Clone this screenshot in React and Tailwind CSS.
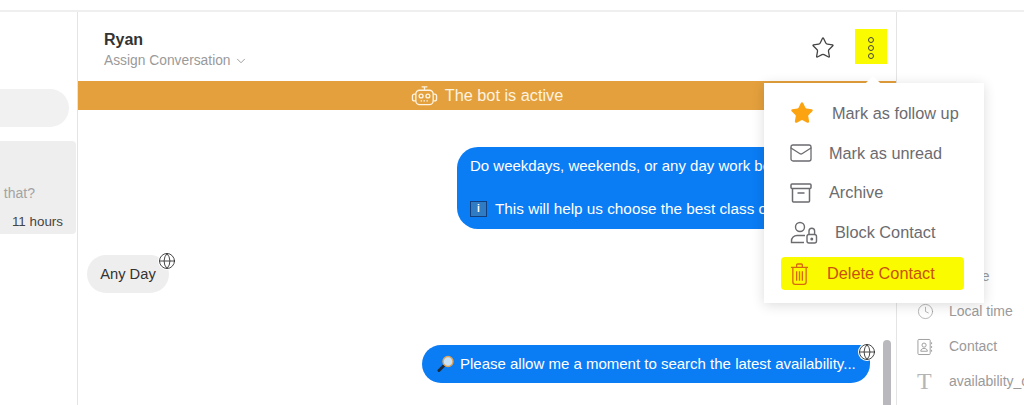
import { ChevronDown, Clock, Globe, Mail, Star } from 'lucide-react'

function BotIcon({ className }) {
  return (
    <svg viewBox="0 0 28 24" fill="none" stroke="currentColor" strokeWidth="1.4" className={className}>
      <rect x="5" y="6" width="18" height="15" rx="4" />
      <path d="M14 6V3M11 2.5h6" />
      <path d="M5 10H3.5a2 2 0 0 0-2 2v3a2 2 0 0 0 2 2H5M23 10h1.500a2 2 0 0 1 2 2v3a2 2 0 0 1-2 2H23" />
      <circle cx="10.500" cy="12" r="2" />
      <circle cx="17.500" cy="12" r="2" />
      <path d="M10 17h8" strokeDasharray="1.500 1.500" />
    </svg>
  )
}

function ArchiveIcon({ className }) {
  return (
    <svg viewBox="0 0 22 20" fill="none" stroke="currentColor" strokeWidth="1.5" className={className}>
      <rect x="1" y="1" width="20" height="4.500" rx="1" />
      <path d="M2.500 5.500V18a1 1 0 0 0 1 1h15a1 1 0 0 0 1-1V5.500" />
      <path d="M7.500 10h7" />
    </svg>
  )
}

function BlockIcon({ className }) {
  return (
    <svg viewBox="0 0 28 23" fill="none" stroke="currentColor" strokeWidth="1.400" className={className}>
      <circle cx="10" cy="6" r="4.500" />
      <path d="M15 14.500h-8a5.500 5.500 0 0 0-5.500 5.500v1.500H14" />
      <rect x="17" y="13.500" width="9.500" height="8.500" rx="2" />
      <path d="M19 13.500V10a2.800 2.800 0 0 1 5.600 0v3.500" />
      <circle cx="21.800" cy="18" r="0.800" fill="currentColor" />
    </svg>
  )
}

function TrashIcon({ className }) {
  return (
    <svg viewBox="0 0 20 24" fill="none" stroke="currentColor" strokeWidth="1.400" className={className}>
      <path d="M1 5h18M7 5V2.500a1 1 0 0 1 1-1h4a1 1 0 0 1 1 1V5" />
      <path d="M3 5v15.500a2.500 2.500 0 0 0 2.500 2.500h9a2.500 2.500 0 0 0 2.500-2.500V5" />
      <path d="M7 9v10M10 9v10M13 9v10" />
    </svg>
  )
}

function ContactIcon({ className }) {
  return (
    <svg viewBox="0 0 17 18" fill="none" stroke="currentColor" strokeWidth="1" className={className}>
      <rect x="1" y="1" width="13" height="16" rx="1" />
      <circle cx="7.500" cy="7" r="2.200" />
      <path d="M4 13.500c0-2 1.500-3 3.500-3s3.500 1 3.500 3zM15.500 4v2M15.500 8v2M15.500 12v2" />
    </svg>
  )
}

function LensIcon({ className }) {
  return (
    <svg viewBox="0 0 18 18" className={className}>
      <path d="M7 10.500 2 15.500" stroke="#1d2a3a" strokeWidth="3" strokeLinecap="round" />
      <circle cx="11" cy="6.500" r="5" fill="#c9e2f5" stroke="#e0a458" strokeWidth="1.400" />
    </svg>
  )
}

function GlobeBadge({ className }) {
  return (
    <span className={`absolute flex h-[18px] w-[18px] items-center justify-center rounded-full bg-white ${className}`}>
      <Globe size={18} strokeWidth={1.200} className="text-[#333]" />
    </span>
  )
}

export default function App() {
  return (
    <div className="relative flex h-[405px] w-[1024px] flex-col overflow-hidden bg-white font-['Liberation_Sans',Arial,sans-serif] text-[#333]">
      <div className="h-3 shrink-0 border-b-2 border-[#efefef]" />

      <div className="flex min-h-0 flex-1">
        {/* conversation list */}
        <div className="w-[78px] shrink-0 overflow-hidden border-r border-[#e4e4e4] pt-[77px]">
          <div className="h-[38px] w-[69px] rounded-r-[19px] bg-[#f1f1f1]" />
          <div className="mt-[14px] flex h-[93px] w-[76px] flex-col items-end rounded-r-sm bg-[#eeeeee] pr-[13px] pt-[42px]">
            <div className="mr-[28px] text-[14px] whitespace-nowrap text-[#a3a3a3]">that?</div>
            <div className="mt-[8px] text-[13.400px] whitespace-nowrap text-[#444]">11 hours</div>
          </div>
        </div>

        {/* chat */}
        <div className="relative w-[818px] shrink-0">
          <div className="flex h-[69px] items-center justify-between pl-[26px] pr-[9px]">
            <div className="pt-[8px]">
              <div className="text-[16px] leading-[18px] font-bold text-[#333]">Ryan</div>
              <div className="mt-[3px] flex items-center gap-[3px] text-[13.800px] leading-[18px] text-[#9a9a9a]">
                Assign Conversation <ChevronDown size={14} strokeWidth={1.200} className="text-[#777]" />
              </div>
            </div>
            <div className="flex items-center gap-[20px]">
              <Star size={24} strokeWidth={1.300} className="mt-[3px] text-[#444]" />
              <div className="flex h-[35px] w-[32px] flex-col items-center justify-center gap-[2px] bg-[#fbfb00] pt-[2px]">
                <span className="h-[6px] w-[6px] rounded-full border-[1.500px] border-[#444]" />
                <span className="h-[6px] w-[6px] rounded-full border-[1.500px] border-[#444]" />
                <span className="h-[6px] w-[6px] rounded-full border-[1.500px] border-[#444]" />
              </div>
            </div>
          </div>

          <div className="flex h-[29px] items-center justify-center gap-[7px] bg-[#e4a03c] text-[16.300px] text-[#fdf3e0]">
            <BotIcon className="h-[24px] w-[27px]" />
            The bot is active
          </div>

          <div className="flex flex-col pr-[26px] pl-[9px]">
            <div className="mt-[37px] h-[82px] w-[413px] self-end rounded-[21px] rounded-br-none bg-[#0a7cf4] px-[13px] pt-[10px] text-[15px] leading-[18px] whitespace-nowrap text-white">
              <div>Do weekdays, weekends, or any day work best for you?</div>
              <div className="mt-[25px] flex items-center gap-[8px] text-[15.300px]">
                <span className="flex h-[16px] w-[17px] items-center justify-center border border-[#123f7d] bg-[#2f7cc4] text-[10px] leading-none font-bold">i</span>
                This will help us choose the best class options.
              </div>
            </div>

            <div className="relative mt-[26px] flex h-[38px] w-[82px] items-center justify-center rounded-[19px] bg-[#eeeeee] text-[14.700px] text-[#333]">
              Any Day
              <GlobeBadge className="top-[-3px] right-[-7px]" />
            </div>

            <div className="relative mt-[52px] flex h-[38px] w-[448px] items-center gap-[5px] self-end rounded-[19px] rounded-tr-[8px] bg-[#0a7cf4] pl-[15px] text-[15px] whitespace-nowrap text-white">
              <LensIcon className="h-[18px] w-[18px]" />
              Please allow me a moment to search the latest availability...
              <GlobeBadge className="top-[-2px] right-[-6px]" />
            </div>
          </div>

          {/* scrollbar */}
          <div className="absolute top-[328px] right-[5px] h-[70px] w-[8px] rounded-full bg-[#b9b9bd]" />
        </div>

        {/* contact details */}
        <div className="min-w-0 flex-1 overflow-hidden border-l border-[#e4e4e4] pt-[247px] pl-[20px] text-[14px] whitespace-nowrap text-[#9a9a9a]">
          <div className="flex h-[35px] items-center gap-[16px]"><span className="w-[16px] shrink-0" />Phone</div>
          <div className="flex h-[35px] items-center gap-[15px]"><Clock size={17} strokeWidth={1} className="shrink-0" />Local time</div>
          <div className="flex h-[35px] items-center gap-[16px]"><ContactIcon className="h-[18px] w-[16px] shrink-0" />Contact</div>
          <div className="flex h-[34px] items-center gap-[16px]"><span className="w-[16px] shrink-0 font-['Liberation_Serif',serif] text-[24px] leading-none text-[#b5b5b5]">T</span>availability_c</div>
        </div>
      </div>

      {/* dropdown menu */}
      <div className="absolute top-[83px] left-[764px] h-[220px] w-[220px] bg-white pt-[10px] text-[16.300px] text-[#6b6b70] shadow-[0_2px_12px_rgba(0,0,0,0.14)]">
        <div className="absolute top-[-5px] left-[104px] h-[10px] w-[10px] rotate-45 bg-white" />
        <div className="flex h-[40px] items-center gap-[18px] pl-[26px]">
          <Star size={24} fill="#fca311" stroke="#fca311" strokeWidth={1.500} strokeLinejoin="round" />
          Mark as follow up
        </div>
        <div className="flex h-[40px] items-center gap-[16px] pl-[25px]">
          <Mail size={24} strokeWidth={1.300} />
          Mark as unread
        </div>
        <div className="flex h-[39px] items-center gap-[17px] pl-[26px]">
          <ArchiveIcon className="h-[20px] w-[22px]" />
          Archive
        </div>
        <div className="flex h-[41px] items-center gap-[17px] pl-[26px]">
          <BlockIcon className="h-[23px] w-[28px]" />
          Block Contact
        </div>
        <div className="mt-[4px] ml-[17px] flex h-[33px] w-[183px] items-center gap-[18px] rounded-sm bg-[#fbfb00] pl-[9px] text-[#c9500f]">
          <TrashIcon className="h-[24px] w-[19px] text-[#d9690f]" />
          Delete Contact
        </div>
      </div>
    </div>
  )
}
